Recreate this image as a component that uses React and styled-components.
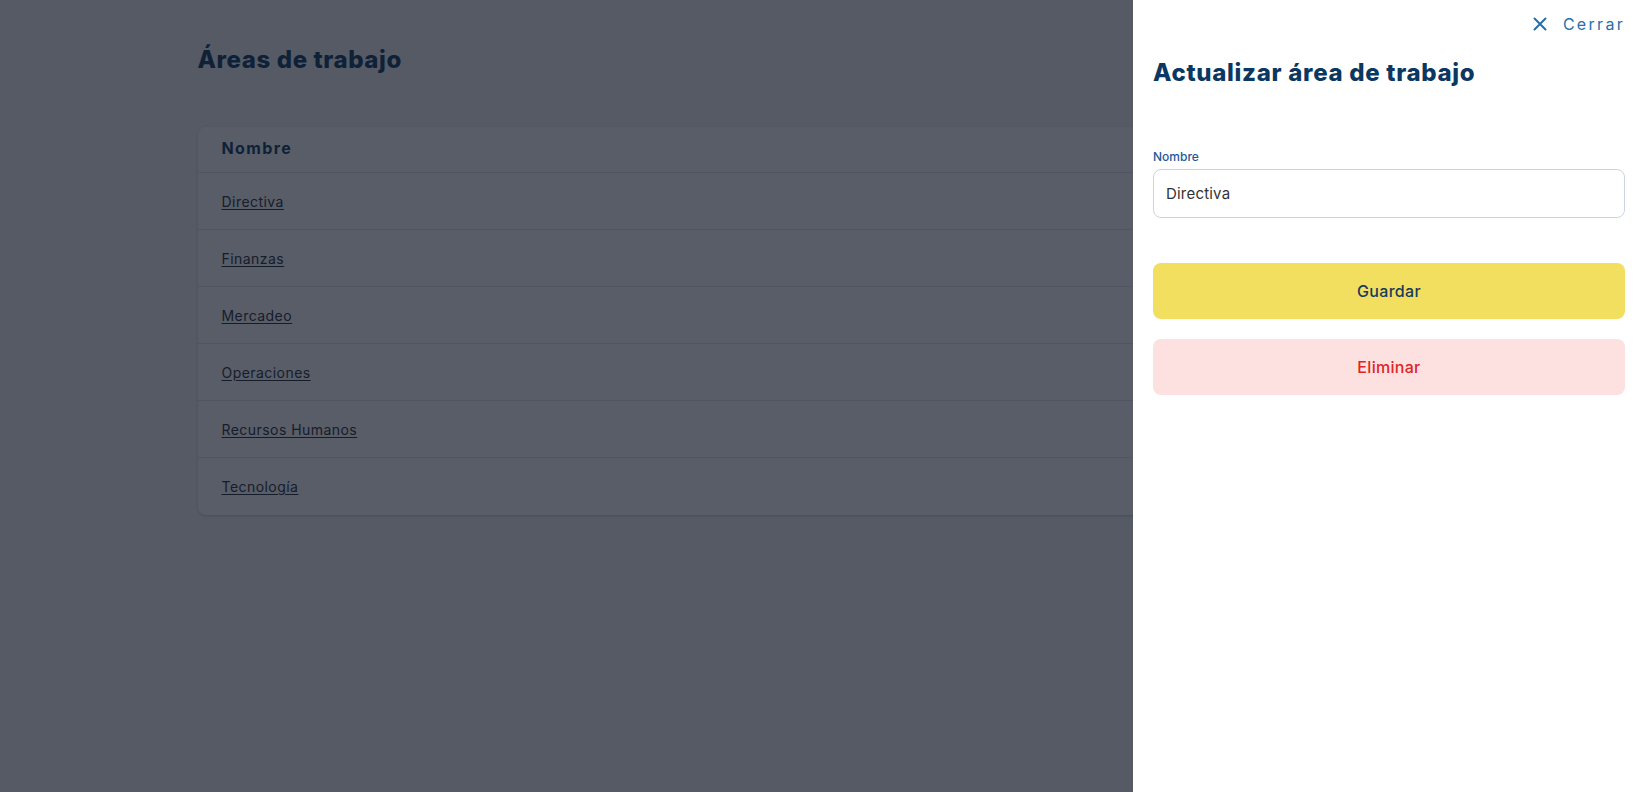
import React from "react";
import styled, { createGlobalStyle } from "styled-components";

const GlobalStyle = createGlobalStyle`
  * { box-sizing: border-box; }
  body {
    margin: 0;
    font-family: "Inter", "Noto Sans", sans-serif;
    background: #f3f4f6;
  }
`;

const Page = styled.div`
  min-height: 100vh;
  background: #f3f4f6;
`;

const Main = styled.main`
  max-width: 1250px;
  margin: 0 auto;
  padding-top: 44px;
`;

const PageTitle = styled.h1`
  margin: 0 0 51px;
  font-size: 24px;
  line-height: 32px;
  font-weight: 800;
  color: #0b3760;
  letter-spacing: 0.6px;
`;

const Card = styled.div`
  background: #fff;
  border-radius: 8px;
  box-shadow: 0 1px 3px rgba(0, 0, 0, 0.12), 0 1px 2px rgba(0, 0, 0, 0.06);
  overflow: hidden;
`;

const HeaderRow = styled.div`
  height: 46px;
  display: flex;
  align-items: center;
  padding: 0 24px 3px;
  border-bottom: 1px solid #e5e7eb;
  font-size: 16px;
  font-weight: 700;
  letter-spacing: 1.4px;
  color: #0b3760;
`;

const Row = styled.div`
  height: 57px;
  display: flex;
  align-items: center;
  padding: 0 24px;
  border-bottom: ${(p) => (p.$last ? "none" : "1px solid #e5e7eb")};
`;

const RowLink = styled.a`
  font-size: 14px;
  letter-spacing: 0.45px;
  color: #1f2937;
  text-decoration: underline;
  text-underline-offset: 2px;
`;

const Overlay = styled.div`
  position: fixed;
  inset: 0;
  background: rgba(17, 24, 39, 0.7);
`;

const Drawer = styled.aside`
  position: fixed;
  top: 0;
  right: 0;
  bottom: 0;
  width: 512px;
  background: #fff;
  padding: 12px 20px 20px;
  display: flex;
  flex-direction: column;
`;

const CloseRow = styled.div`
  display: flex;
  justify-content: flex-end;
`;

const CloseButton = styled.button`
  display: flex;
  align-items: center;
  gap: 16px;
  height: 24px;
  padding: 0;
  border: none;
  background: none;
  font-family: inherit;
  font-size: 16px;
  letter-spacing: 2.3px;
  color: #2470ad;
  cursor: pointer;
`;

const DrawerTitle = styled.h2`
  margin: 21px 0 60px;
  font-size: 24px;
  line-height: 32px;
  font-weight: 800;
  color: #0b3760;
  letter-spacing: 0.7px;
`;

const Label = styled.label`
  display: block;
  font-size: 12px;
  line-height: 16px;
  font-weight: 500;
  color: #1e5a96;
  margin-bottom: 4px;
`;

const Input = styled.input`
  width: 100%;
  height: 49px;
  border: 1px solid #cbd5e1;
  border-radius: 8px;
  padding: 0 12px;
  font-family: inherit;
  font-size: 15px;
  letter-spacing: 0.2px;
  color: #333;
  outline: none;
`;

const Actions = styled.div`
  margin-top: 45px;
  display: flex;
  flex-direction: column;
  gap: 20px;
`;

const ActionButton = styled.button`
  height: 56px;
  width: 100%;
  border: none;
  border-radius: 8px;
  font-family: inherit;
  font-size: 16px;
  font-weight: 500;
  letter-spacing: 0.3px;
  cursor: pointer;
  background: ${(p) => (p.$variant === "danger" ? "#fde1e1" : "#f2de5f")};
  color: ${(p) => (p.$variant === "danger" ? "#e02424" : "#173a5e")};
`;

const areas = [
  "Directiva",
  "Finanzas",
  "Mercadeo",
  "Operaciones",
  "Recursos Humanos",
  "Tecnología",
];

export default function App() {
  return (
    <Page>
      <GlobalStyle />
      <Main>
        <PageTitle>Áreas de trabajo</PageTitle>
        <Card>
          <HeaderRow>Nombre</HeaderRow>
          {areas.map((a, i) => (
            <Row key={a} $last={i === areas.length - 1}>
              <RowLink href="#">{a}</RowLink>
            </Row>
          ))}
        </Card>
      </Main>
      <Overlay />
      <Drawer>
        <CloseRow>
          <CloseButton>
            <svg width="14" height="14" viewBox="0 0 14 14" fill="none">
              <path d="M1.5 1.5L12.5 12.5M12.5 1.5L1.5 12.5" stroke="#2470ad" strokeWidth="2" strokeLinecap="round" />
            </svg>
            Cerrar
          </CloseButton>
        </CloseRow>
        <DrawerTitle>Actualizar área de trabajo</DrawerTitle>
        <Label htmlFor="nombre">Nombre</Label>
        <Input id="nombre" defaultValue="Directiva" />
        <Actions>
          <ActionButton>Guardar</ActionButton>
          <ActionButton $variant="danger">Eliminar</ActionButton>
        </Actions>
      </Drawer>
    </Page>
  );
}
